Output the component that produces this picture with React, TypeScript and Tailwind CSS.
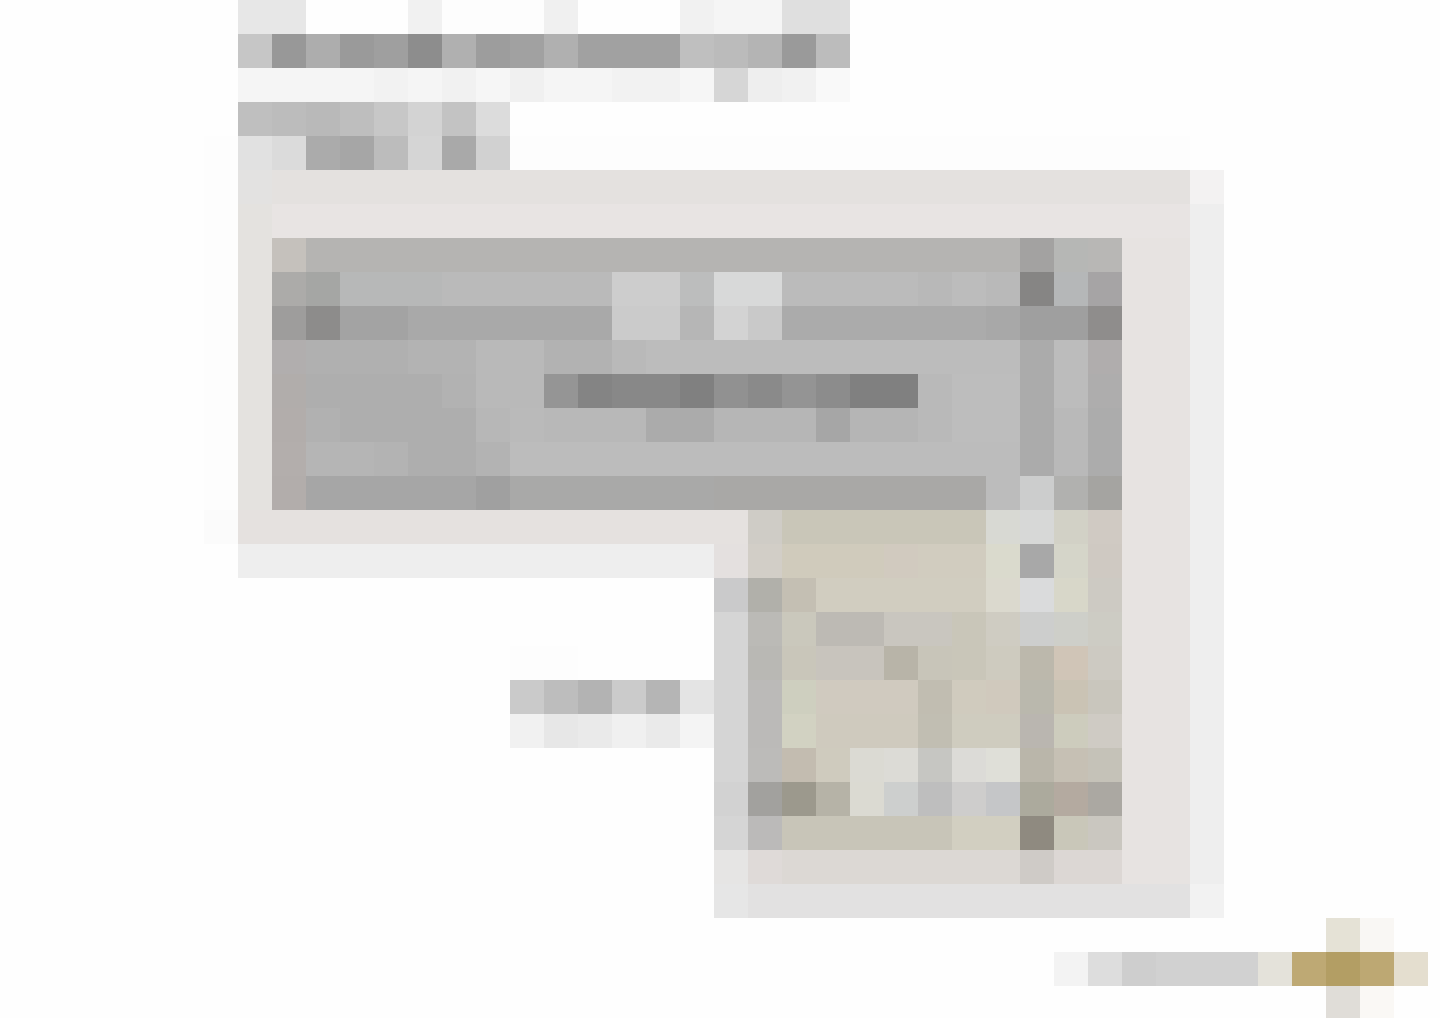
const CELL = 34;
const COLUMNS_WIDTH = 1440;

type Tile = { column: number; span: number; colour: string };

// Each row lists its tiles as "column:colour" or "column-lastColumn:colour".
function parseRow(row: string): Tile[] {
  return row
    .split(" ")
    .filter(Boolean)
    .map((entry) => {
      const [range, colour] = entry.split(":");
      const [first, last] = range.split("-").map(Number);
      return { column: first, span: (last ?? first) - first + 1, colour: "#" + colour };
    });
}

const heading = [
  "7-8:e7e7e7 9-11:fefefe 12:f1f1f1 13-15:fdfdfd 16:f0f0f0 17-19:fefefe 20:f1f1f1 21-22:f5f5f5 23-24:dfdfdf",
  "7:c6c6c6 8:989898 9:adadad 10:9a9a9a 11:9f9f9f 12:8d8d8d 13:b0b0b0 14:9d9d9d 15:a1a1a1 16:b0b0b0 17-19:a1a1a1 20:bfbfbf 21:bbbbbb 22:b4b4b4 23:9a9a9a 24:bcbcbc",
  "7-10:f5f5f5 11:f2f2f2 12:f5f5f5 13:f1f1f1 14:f6f6f6 15:f0f0f0 16-17:f5f5f5 18-19:f2f2f2 20:f6f6f6 21:d6d6d6 22:eeeeee 23:f1f1f1 24:f9f9f9",
  "7:bfbfbf 8:bcbcbc 9:b9b9b9 10:bebebe 11:c7c7c7 12:d3d3d3 13:c3c3c3 14:dcdcdc",
  "6:fdfdfd 7:e1e1e1 8:dbdbdb 9:ababab 10:a6a6a6 11:bcbcbc 12:d5d5d5 13:a9a9a9 14:d1d1d1 15-34:fdfdfd",
];

const plan = [
  "6:fdfdfd 7:e3e2e1 8-34:e4e1df 35:f3f2f2",
  "6:fdfdfd 7:e4e2df 8-34:e8e4e3 35:eeeeee",
  "6:fdfdfd 7:e4e2df 8:c5c1bc 9-29:b5b4b2 30:a3a2a1 31:b6b7b5 32:b8b7b5 33-34:e7e3e1 35:eeeeee",
  "6:fdfdfd 7:e4e2df 8:acaba9 9:a5a6a4 10-12:b7b8b8 13-17:bababa 18-19:cdcdcd 20:bcbdbd 21-22:d8d9d9 23-26:bbbbbb 27:b8b8b8 28:bcbcbc 29:b9b9b9 30:868584 31:b5b7b8 32:a6a4a5 33-34:e7e3e1 35:eeeeee",
  "6:fdfdfd 7:e4e2df 8:9e9d9c 9:8d8c8b 10-11:a3a3a3 12-17:a9a9a9 18-19:cbcbcb 20:b6b6b6 21:d3d3d3 22:c9c9c9 23-28:ababab 29:a8a8a8 30-31:9f9f9f 32:8f8d8c 33-34:e7e3e1 35:eeeeee",
  "6:fdfdfd 7:e4e2df 8:b1aeae 9-11:b0b0b0 12-13:b3b3b3 14-15:b9b9b9 16-17:b2b2b2 18:b9b9b9 19-29:bcbcbc 30:ababab 31:bcbcbc 32:b0adad 33-34:e7e3e1 35:eeeeee",
  "6:fdfdfd 7:e4e2df 8:b1adab 9-12:aeaeae 13:b2b2b2 14-15:b9b9b9 16:959595 17:848484 18-19:888888 20:808080 21:919191 22:8a8a8a 23:949494 24:8c8c8c 25-26:808080 27:b9b9b9 28-29:bdbdbd 30:ababab 31:bcbcbc 32:aeadad 33-34:e7e3e1 35:eeeeee",
  "6:fdfdfd 7:e4e2df 8:b2adab 9:b1b1b1 10-13:aeaeae 14:b7b7b7 15:bababa 16-18:b8b8b8 19-20:ababab 21-23:b6b6b6 24:a6a6a6 25-26:b5b5b5 27:b9b9b9 28-29:bdbdbd 30:ababab 31:b9b9b9 32:acacac 33-34:e7e3e1 35:eeeeee",
  "6:fdfdfd 7:e4e2df 8:b3aeac 9-10:b5b5b5 11:b3b3b3 12-13:aeaeae 14:b3b3b3 15-29:bcbcbc 30:ababab 31:b9b9b9 32:acacac 33-34:e7e3e1 35:eeeeee",
  "6:fdfdfd 7:e4e2df 8:b2adab 9-13:a6a6a6 14:a0a0a0 15-20:a9a9a8 21-28:a9a8a6 29:bcbcbc 30:cccdcd 31:b1b1af 32:a5a4a1 33-34:e7e3e1 35:eeeeee",
  "6:fbfbfb 7-21:e5e1df 22:cfccc6 23-28:c9c6b8 29:d8d9d3 30:d7d8d7 31:d2d1c6 32:d0cac3 33-34:e7e3e1 35:eeeeee",
  "7-20:eeeeee 21:e4e0df 22:d2cec7 23-25:d0cbbc 26:d1cabf 27-28:d1ccbf 29:dadacd 30:a8a8a8 31:d5d5c9 32:cfc9c2 33-34:e7e3e1 35:eeeeee",
  "21:cacacb 22:b1b0aa 23:c4bfb3 24-28:d1cdc0 29:dbd9ce 30:dadbdc 31:d8d7c9 32:cdcac3 33-34:e7e3e1 35:eeeeee",
  "21:d5d5d5 22:bbbab6 23:cac8bc 24-25:bdbab4 26-27:c9c6bf 28:c9c6b9 29:cfccc2 30:cdcecd 31:cecfc9 32:cdccc4 33-34:e7e3e1 35:eeeeee",
  "15-16:fdfdfd 21:d5d5d5 22:b9b8b4 23:c9c6ba 24-25:c8c4bd 26:b8b4a8 27:c8c5b9 28:c9c6b9 29:cecbbf 30:bcb8ac 31:d0c5b7 32:cdcac2 33-34:e7e3e1 35:eeeeee",
  "15:cacaca 16:bdbdbd 17:b3b3b3 18:cbcbcb 19:b5b5b5 20:e4e4e4 21:d5d5d5 22:bbbab8 23:cecfbf 24-26:d0cabf 27:c1bdb1 28:d0cbbe 29:d0c9bd 30:bab8ad 31:cac3b4 32:c9c6bd 33-34:e7e3e1 35:eeeeee",
  "15:f1f1f1 16:e7e7e7 17:eaeaea 18:f0f0f0 19:eaeaea 20:f4f4f4 21:d5d5d5 22:bbbab8 23:d2d2c2 24-26:cfcabe 27:c1beb2 28-29:cfccbf 30:bab6b0 31:cdccbd 32:cfcbc4 33-34:e7e3e1 35:eeeeee",
  "21:d5d5d5 22:bcbbb9 23:c3bcb0 24:cfcbbe 25:dbdad3 26:dcdbd6 27:c6c6c2 28:dcdbd7 29:dfdfd8 30:bab6aa 31:c6c0b4 32:c5c2b8 33-34:e7e3e1 35:eeeeee",
  "21:d2d2d2 22:a2a19e 23:9c998d 24:b6b3a7 25:dbdad2 26:cdcfce 27:bebebe 28:cecdcc 29:c5c6c8 30:acaa9d 31:b4aaa0 32:aba8a2 33-34:e7e3e1 35:eeeeee",
  "21:d5d5d5 22:bbbab9 23-27:c8c5b8 28-29:d2cfc1 30:8f8a80 31:c9c7b9 32:cac7c0 33-34:e7e3e1 35:eeeeee",
  "21:e6e5e4 22:dfdad8 23-29:dcd8d4 30:cfcbc7 31-32:dcd7d4 33-34:e7e3e1 35:eeeeee",
  "21:e6e6e6 22-34:e2e1e1 35:f2f2f2",
];

const signature = [
  "39:e5e2d6 40:f9f7f4",
  "31:f3f3f3 32:dddddd 33:cecece 34-36:d1d1d1 37:e4e2da 38:bea974 39:b39e64 40:bda873 41:e4decf",
  "39:e0ddd8 40:faf8f5",
];

function Mosaic({ rows, height, label }: { rows: string[]; height: number; label: string }) {
  return (
    <svg
      viewBox={`0 0 ${COLUMNS_WIDTH} ${height}`}
      className="block h-auto w-full"
      shapeRendering="crispEdges"
      role="img"
      aria-label={label}
    >
      {rows.map((row, y) =>
        parseRow(row).map((tile) => (
          <rect
            key={`${y}-${tile.column}`}
            x={tile.column * CELL}
            y={y * CELL}
            width={tile.span * CELL}
            height={CELL}
            fill={tile.colour}
          />
        )),
      )}
    </svg>
  );
}

export default function App() {
  return (
    <div className="flex flex-col bg-[#fefefe]">
      <header>
        <Mosaic rows={heading} height={170} label="Pixelated heading" />
      </header>
      <main>
        <Mosaic rows={plan} height={748} label="Pixelated L-shaped plan" />
      </main>
      <footer>
        <Mosaic rows={signature} height={100} label="Pixelated logo" />
      </footer>
    </div>
  );
}
